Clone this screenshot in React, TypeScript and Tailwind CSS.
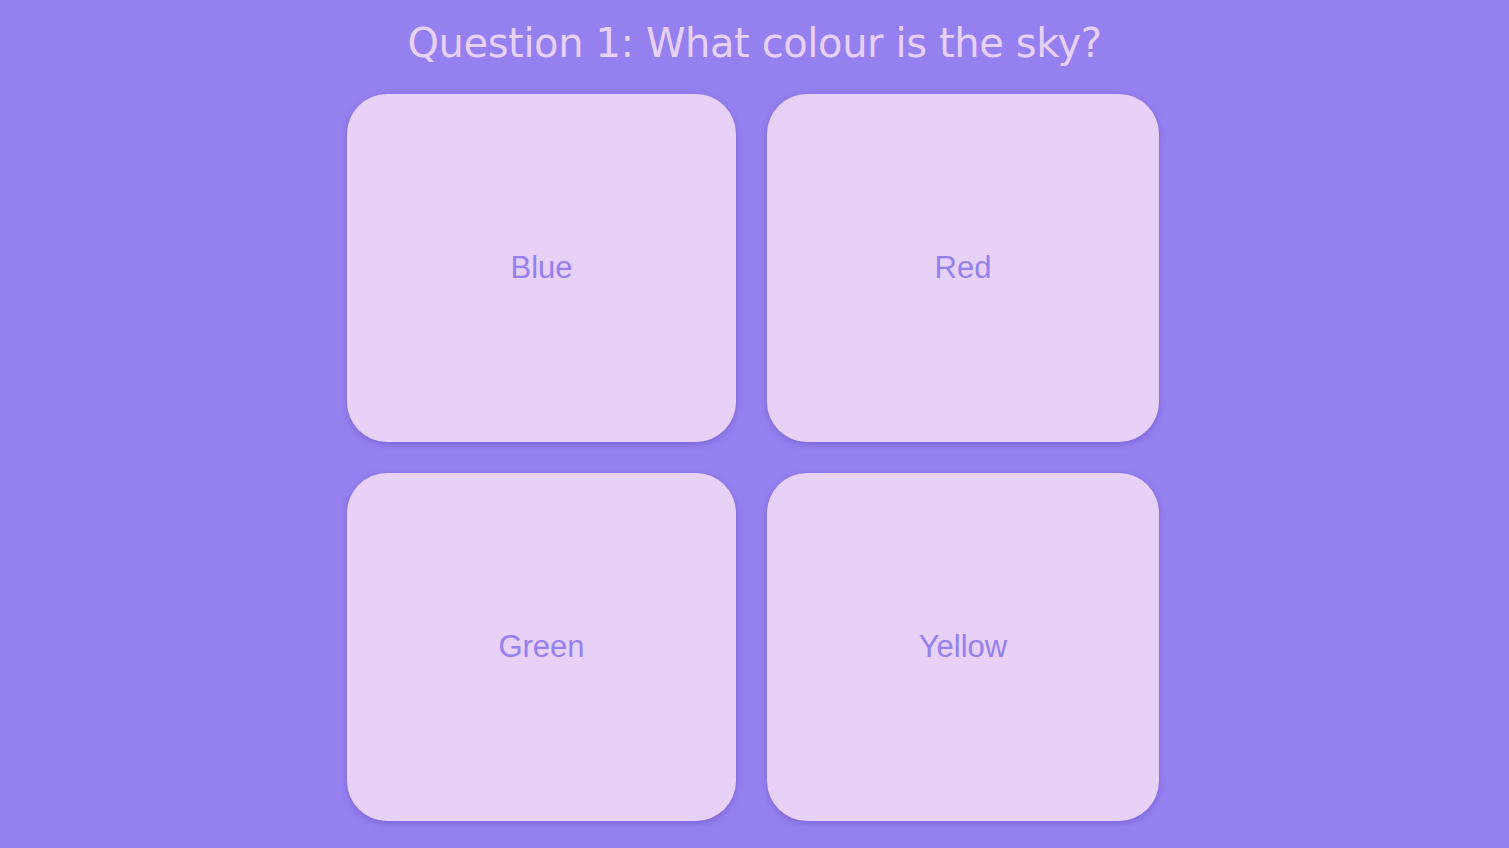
export default function App() {
  const answers = ["Blue", "Red", "Green", "Yellow"];
  return (
    <div className="w-full min-h-[848px] bg-[#9480ee] flex flex-col items-center overflow-hidden">
      <h1
        className="mt-[17px] text-[40px] leading-[52px] text-[#e8d1f7] font-medium tracking-[-0.4px]"
        style={{ fontFamily: '"DejaVu Sans", sans-serif' }}
      >
        Question 1: What colour is the sky?
      </h1>
      <div className="mt-[25px] grid grid-cols-[389px_392px] gap-x-[31px] gap-y-[31px] ml-[-3px]">
        {answers.map((a) => (
          <button
            key={a}
            className="h-[348px] rounded-[40px] bg-[#e8d1f7] shadow-[0_2px_6px_rgba(80,50,180,0.35)] flex items-center justify-center text-[31px] text-[#9580ee]"
            style={{ fontFamily: '"Liberation Sans", Arial, sans-serif' }}
          >
            {a}
          </button>
        ))}
      </div>
    </div>
  );
}
